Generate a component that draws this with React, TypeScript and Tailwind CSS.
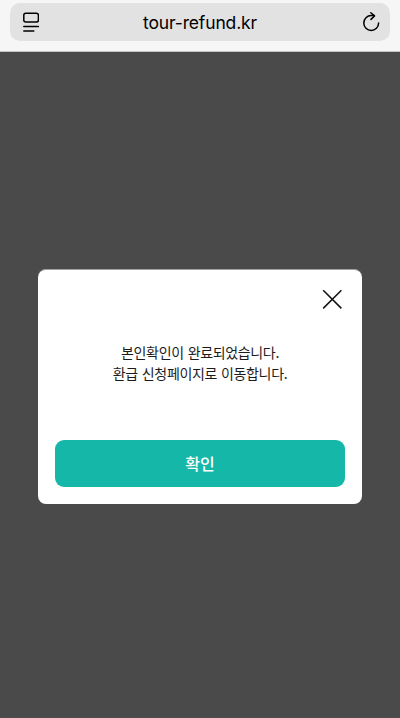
import { useState } from "react"

const messages = ["본인확인이 완료되었습니다.", "환급 신청페이지로 이동합니다."]

function AddressBar() {
  return (
    <header className="h-[52px] shrink-0 border-b border-[#c4c4c4] bg-[#f6f6f6] px-2.5 pt-[3px]">
      <div className="flex h-[38px] items-center justify-between rounded-[10px] bg-[#e2e2e2] pl-[13px] pr-[9px]">
        <button aria-label="페이지 메뉴" className="h-5 w-4">
          <svg viewBox="0 0 16 20" className="h-5 w-4" fill="none" stroke="#000" strokeWidth="1.5" strokeLinecap="round">
            <rect x="0.8" y="1.2" width="14.6" height="8.8" rx="2" />
            <path d="M0.8 14.4h14.6M0.8 19h10" />
          </svg>
        </button>
        <span className="pt-px font-['Inter','Noto_Sans_CJK_KR',sans-serif] text-[17.5px] leading-6 tracking-[-0.15px] text-black">
          tour-refund.kr
        </span>
        <button aria-label="새로고침" className="h-5 w-5">
          <svg
            viewBox="0 0 20 20"
            className="h-5 w-5"
            fill="none"
            stroke="#000"
            strokeWidth="1.5"
            strokeLinecap="round"
            strokeLinejoin="round"
          >
            <path d="M17.6 11A7.4 7.4 0 1 1 10.2 3.6h3" />
            <path d="M9.8 0.8l3.7 3.1-3.5 3.5" />
          </svg>
        </button>
      </div>
    </header>
  )
}

export default function App() {
  const [open, setOpen] = useState(true)

  return (
    <div className="flex h-[718px] w-[400px] flex-col overflow-hidden bg-[#4a4a4a] font-['Noto_Sans_CJK_KR',sans-serif]">
      <AddressBar />

      {/* Dimmed page */}
      <main className="flex-1 border-b border-[#514a4c] px-[38px] pt-[217px]">
        {open && (
          <div
            role="dialog"
            className="flex h-[235px] flex-col rounded-lg border-t border-[#a2a2a2] bg-white px-[17px] pb-[17px]"
          >
            <div className="flex justify-end pr-[3px] pt-[19px]">
              <button aria-label="닫기" className="h-5 w-5" onClick={() => setOpen(false)}>
                <svg viewBox="0 0 20 20" className="h-5 w-5" stroke="#111" strokeWidth="1.5">
                  <path d="M1.2 1.2L19.4 19.4M19.4 1.2L1.2 19.4" />
                </svg>
              </button>
            </div>
            <div className="mt-[33px] text-center text-sm leading-[21px] tracking-[-0.35px] text-[#1c1c1c] [word-spacing:1.2px]">
              {messages.map((message) => (
                <p key={message}>{message}</p>
              ))}
            </div>
            <button
              className="mt-auto flex h-[47px] w-full justify-center rounded-[9px] bg-[#15b8a8] pt-[11px] text-base font-medium leading-6 text-white"
              onClick={() => setOpen(false)}
            >
              확인
            </button>
          </div>
        )}
      </main>
    </div>
  )
}
